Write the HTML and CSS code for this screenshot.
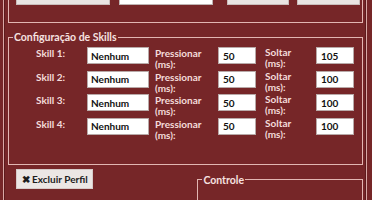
FILE: index.html
```html
<!DOCTYPE html>
<html>

<head>
    <title>Perfil - Skills</title>
    <link rel="stylesheet" href="styles.css">
</head>

<body>
    <div class="frame">
        <!-- Top group (scrolled partly out of view) -->
        <div class="top-group">
            <div class="top-row">
                <div class="btn-light wide"></div>
                <div class="text-box wide"></div>
                <div class="btn-light small"></div>
                <div class="btn-light small last"></div>
            </div>
        </div>

        <!-- Skills -->
        <fieldset class="group skills-group">
            <legend>Configuração de Skills</legend>
            <div class="skill-row">
                <span class="lbl skill-lbl">Skill 1:</span>
                <input type="text" class="field name-field" value="Nenhum">
                <span class="lbl press-lbl">Pressionar<br>(ms):</span>
                <input type="text" class="field num-field" value="50">
                <span class="lbl release-lbl">Soltar<br>(ms):</span>
                <input type="text" class="field num-field" value="105">
            </div>
            <div class="skill-row">
                <span class="lbl skill-lbl">Skill 2:</span>
                <input type="text" class="field name-field" value="Nenhum">
                <span class="lbl press-lbl">Pressionar<br>(ms):</span>
                <input type="text" class="field num-field" value="50">
                <span class="lbl release-lbl">Soltar<br>(ms):</span>
                <input type="text" class="field num-field" value="100">
            </div>
            <div class="skill-row">
                <span class="lbl skill-lbl">Skill 3:</span>
                <input type="text" class="field name-field" value="Nenhum">
                <span class="lbl press-lbl">Pressionar<br>(ms):</span>
                <input type="text" class="field num-field" value="50">
                <span class="lbl release-lbl">Soltar<br>(ms):</span>
                <input type="text" class="field num-field" value="100">
            </div>
            <div class="skill-row">
                <span class="lbl skill-lbl">Skill 4:</span>
                <input type="text" class="field name-field" value="Nenhum">
                <span class="lbl press-lbl">Pressionar<br>(ms):</span>
                <input type="text" class="field num-field" value="50">
                <span class="lbl release-lbl">Soltar<br>(ms):</span>
                <input type="text" class="field num-field" value="100">
            </div>
        </fieldset>

        <div class="bottom-row">
            <button class="btn-delete">&#10006; Excluir Perfil</button>
            <fieldset class="group control-group">
                <legend>Controle</legend>
            </fieldset>
        </div>
    </div>
</body>

</html>
```

FILE: styles.css
```css
/* Page */
body {
    margin: 0;
    background: #762628;
    font-family: Lato, "Open Sans", sans-serif;
    font-size: 10px;
    font-weight: 700;
    overflow: hidden;
    height: 200px;
}

/* Outer tab page border */
.frame {
    box-sizing: border-box;
    width: 364px;
    margin: -18px 0 0 3px;
    padding: 0 3px 0 4px;
    border-left: 1px solid #d9a8a5;
    border-right: 1px solid #d9a8a5;
    box-shadow: inset 1px 0 0 #5c1a1c, inset -1px 0 0 #5c1a1c;
    height: 218px;
    overflow: hidden;
}

/* Top group, cut off by the window */
.top-group {
    box-sizing: border-box;
    height: 41px;
    border: 1px solid #e2b6b2;
    padding-top: 3px;
}

.top-row {
    display: flex;
    height: 19px;
}

.btn-light {
    background: #e9e4e2;
    border: 1px solid #c9bdbb;
    box-sizing: border-box;
}

.text-box {
    background: #fff;
    border: 1px solid #bfb4b3;
    box-sizing: border-box;
}

.top-row .wide {
    width: 94px;
}

.top-row .btn-light.wide {
    margin-left: 7px;
}

.top-row .text-box.wide {
    margin-left: 9px;
}

.top-row .small {
    width: 62px;
    margin-left: 14px;
}

.top-row .small.last {
    width: 63px;
    margin-left: 8px;
}

/* Group boxes */
.group {
    margin: 0;
    padding: 0;
    border: 1px solid #e2b6b2;
    min-width: 0;
}

.group legend {
    margin-left: 4px;
    padding: 0 1px;
    line-height: 12px;
    color: #f6e2e0;
    font-size: 10.5px;
}

.skills-group {
    margin-top: 8px;
    padding: 4px 0 29px 0;
}

/* Skill rows */
.skill-row {
    display: flex;
    align-items: flex-start;
    height: 17px;
    margin-bottom: 6.5px;
}

.skill-row:last-child {
    margin-bottom: 0;
}

.lbl {
    color: #f4dcdb;
    line-height: 11px;
    margin-top: 1px;
    white-space: nowrap;
}

.skill-lbl {
    width: 51px;
    margin-left: 27px;
}

.press-lbl {
    width: 63px;
    margin-left: 6px;
}

.release-lbl {
    width: 51px;
    margin-left: 9px;
    margin-top: 0;
}

.field {
    box-sizing: border-box;
    height: 17px;
    margin: 0;
    padding: 0 3px;
    border: 1px solid #b8a9a8;
    background: #fff;
    color: #111;
    font-family: inherit;
    font-size: 10px;
    font-weight: 700;
    outline: none;
}

.name-field {
    width: 62px;
}

.num-field {
    width: 38px;
    padding-left: 4px;
}

/* Bottom row */
.bottom-row {
    display: flex;
    align-items: flex-start;
    margin-top: 4px;
}

.btn-delete {
    box-sizing: border-box;
    width: 78px;
    height: 20px;
    margin-left: 8px;
    padding: 0;
    background: #ebe6e4;
    border: 1px solid #d6cbc9;
    color: #1c1c1c;
    font-family: inherit;
    font-size: 10px;
    font-weight: 700;
}

.control-group {
    margin-left: 104px;
    width: 165px;
    height: 40px;
    margin-top: 5px;
}
```
